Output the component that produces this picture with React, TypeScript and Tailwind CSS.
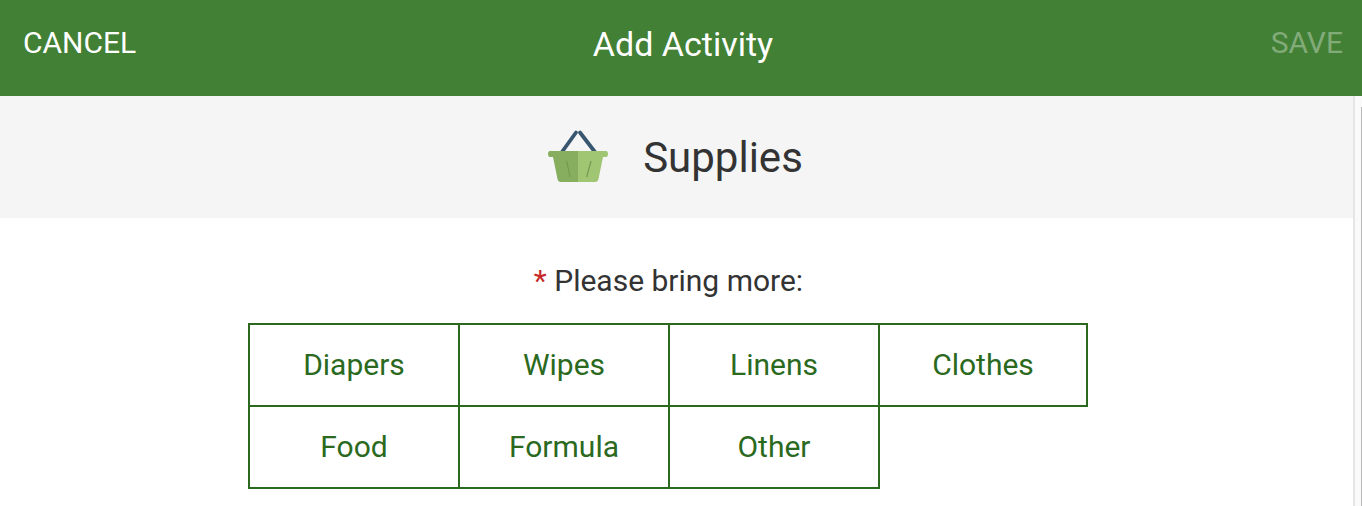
import React from 'react';

const options = ['Diapers', 'Wipes', 'Linens', 'Clothes', 'Food', 'Formula', 'Other'];

const BasketIcon = () => (
  <svg width="60" height="56" viewBox="0 0 60 56" aria-hidden="true" className="shrink-0">
    <path d="M12.5 25 L28 3.5 M32 3.5 L48.5 25" stroke="#38566f" strokeWidth="3.8" strokeLinecap="round" fill="none" />
    <path d="M1.5 22 H30 V53 H13 Q10 53 9.5 50 L5 28 H1.5 Q0 27.5 0 25 Q0 22.5 1.5 22 Z" fill="#86ae5e" />
    <path d="M30 22 H58.5 Q60 22.5 60 25 Q60 27.5 58.5 28 H55 L50.5 50 Q50 53 47 53 H30 Z" fill="#a0c673" />
    <path d="M18.7 32 L22 48 M43 32 L38.7 48" stroke="#75994f" strokeWidth="1.2" fill="none" />
  </svg>
);

export default function App() {
  return (
    <div className="h-[506px] w-[1362px] overflow-hidden flex flex-col bg-white font-['Roboto',sans-serif]">
      <header className="h-24 shrink-0 bg-[#428035] grid grid-cols-[1fr_auto_1fr] items-center pl-[23px] pr-[19px] pb-[8px] text-[30px]">
        <button className="text-white justify-self-start -mt-[3px]">CANCEL</button>
        <h1 className="text-white text-[34px] font-normal">Add Activity</h1>
        <button className="text-white/35 justify-self-end -mt-[3px]">SAVE</button>
      </header>
      <div className="flex flex-1 min-h-0">
        <main className="flex-1 min-w-0">
          <div className="h-[122px] bg-[#f5f5f5] flex items-center justify-center gap-[35px] pr-[2px]">
            <BasketIcon />
            <span className="text-[#333333] text-[42px]">Supplies</span>
          </div>
          <p className="mt-[44px] pr-[16px] text-center text-[#333333] text-[30px] leading-[38px]">
            <span className="text-[#c62828]">*</span> Please bring more:
          </p>
          <div className="mt-[23px] ml-[248px] grid grid-cols-[repeat(4,210px)] auto-rows-[82px] w-[842px]">
            {options.map((opt, i) => (
              <button
                key={opt}
                className={`h-[84px] pb-[2px] border-2 border-[#2b6a1e] text-[#2b6a1e] text-[30px] -mr-[2px] ${i === 3 ? 'w-[210px]' : 'w-[212px]'}`}
              >
                {opt}
              </button>
            ))}
          </div>
        </main>
        <div className="w-[9px] shrink-0 flex bg-[#fafafa] border-l-2 border-[#e6e6e6]">
          <div className="ml-auto mt-[11px] w-px bg-[#b8b8b8]" />
        </div>
      </div>
    </div>
  );
}
